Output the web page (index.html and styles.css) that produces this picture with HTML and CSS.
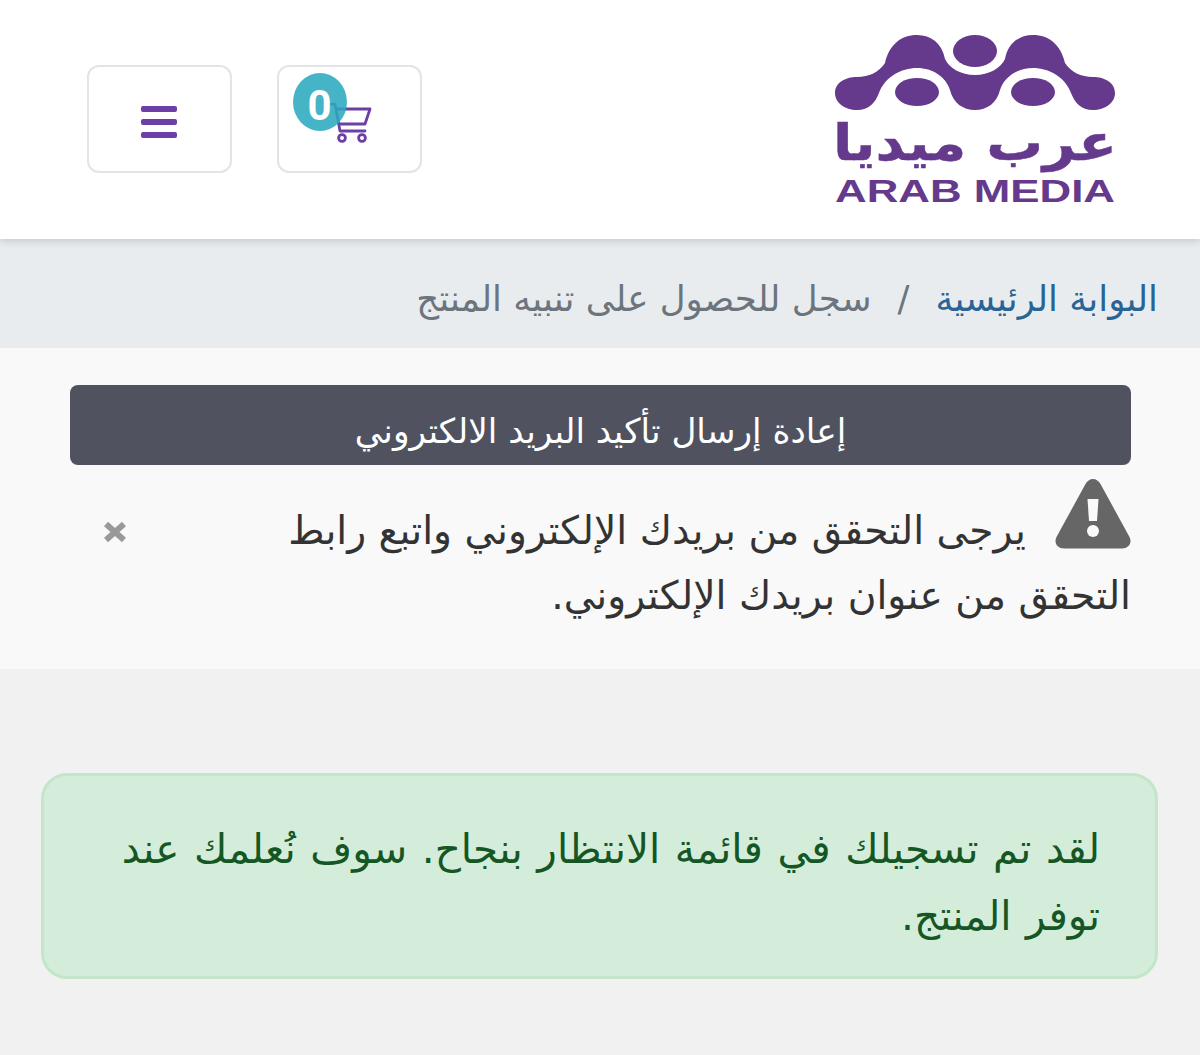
FILE: index.html
```html
<!DOCTYPE html>
<html lang="ar" dir="rtl">
<head>
<meta charset="utf-8">
<title>عرب ميديا</title>
<link rel="stylesheet" href="styles.css">
</head>
<body>
<header class="topbar">
  <svg class="logo" viewBox="0 0 280 170" width="280" height="170" aria-label="Arab Media">
    <path class="logo-mark" d="M0 58C0 48 10 42 22 42C34 42 44 37 50 28C54 10 66 0 82 0C96 0 107 8 110 24C114 33 126 40 140 40C154 40 166 33 170 24C173 8 184 0 198 0C214 0 226 10 230 28C236 37 246 42 258 42C270 42 280 48 280 58C280 68 270 75 258 75C246 75 240 68 236 58C230 42 214 33 198 33C182 33 169 42 165 55C162 68 152 75 140 75C128 75 118 68 115 55C111 42 98 33 82 33C66 33 50 42 44 58C40 68 34 75 22 75C10 75 0 68 0 58Z"/>
    <ellipse class="logo-mark" cx="140" cy="16" rx="22" ry="16"/>
    <ellipse class="logo-mark" cx="82" cy="57" rx="22" ry="14"/>
    <ellipse class="logo-mark" cx="198" cy="57" rx="22" ry="14"/>
    <text class="logo-ar" x="140" y="125" text-anchor="middle" textLength="284" lengthAdjust="spacingAndGlyphs">عرب ميديا</text>
    <text class="logo-en" x="140" y="167" text-anchor="middle" textLength="280" lengthAdjust="spacingAndGlyphs" direction="ltr">ARAB MEDIA</text>
  </svg>
  <div class="actions">
    <button class="icon-btn cart-btn" type="button">
      <svg class="cart" viewBox="0 0 44 42" width="44" height="42">
        <path d="M0 1H7L12 28H37M9 6H42L37 21H11" fill="none" stroke="#6b3fa5" stroke-width="2.8" stroke-linejoin="round" stroke-linecap="round"/>
        <circle cx="14" cy="35" r="3.4" fill="#fff" stroke="#6b3fa5" stroke-width="2.8"/>
        <circle cx="34" cy="35" r="3.4" fill="#fff" stroke="#6b3fa5" stroke-width="2.8"/>
      </svg>
      <span class="badge">0</span>
    </button>
    <button class="icon-btn" type="button">
      <span class="burger"><i></i><i></i><i></i></span>
    </button>
  </div>
</header>
<nav class="crumbs">
  <a href="#">البوابة الرئيسية</a>
  <span class="sep">/</span>
  <span class="current">سجل للحصول على تنبيه المنتج</span>
</nav>
<section class="verify">
  <a class="resend" href="#">إعادة إرسال تأكيد البريد الالكتروني</a>
  <div class="notice">
    <svg class="warn" viewBox="0 0 76 70" width="76" height="70">
      <path d="M38 0C41 0 44 2 45.500 5L74.500 58C77.500 64 73.500 69.500 67 69.500H9C2.500 69.500 -1.500 64 1.500 58L30.500 5C32 2 35 0 38 0Z" fill="#666"/>
      <path d="M32.500 20H43.500L42 42H34Z" fill="#f9f9f9"/>
      <circle cx="38" cy="52" r="6" fill="#f9f9f9"/>
    </svg>
    <svg class="close" viewBox="0 0 26 22" width="26" height="22">
      <path d="M4 3L22 19M22 3L4 19" fill="none" stroke="#999" stroke-width="6"/>
    </svg>
    يرجى التحقق من بريدك الإلكتروني واتبع رابط التحقق من عنوان بريدك الإلكتروني.
  </div>
</section>
<main class="content">
  <div class="success">لقد تم تسجيلك في قائمة الانتظار بنجاح. سوف نُعلمك عند توفر المنتج.</div>
</main>
</body>
</html>
```
FILE: styles.css
```css
* { box-sizing: border-box; }
html, body { margin: 0; padding: 0; }
body {
  width: 1200px;
  height: 1055px;
  overflow: hidden;
  background: #f1f1f1;
  font-family: "DejaVu Sans", "Noto Sans", sans-serif;
}
.topbar {
  height: 239px;
  background: #fff;
  display: flex;
  justify-content: space-between;
  align-items: flex-start;
  padding: 35px 85px 0 87px;
  box-shadow: 0 2px 8px rgba(0,0,0,.16);
  position: relative;
}
.logo { display: block; overflow: visible; }
.logo-mark { fill: #65398c; }
.logo-ar { fill: #65398c; stroke: #65398c; stroke-width: .5px; font-size: 50px; font-weight: 700; font-family: "DejaVu Sans", sans-serif; }
.logo-en { fill: #65398c; font-size: 32px; font-weight: 700; font-family: "Liberation Sans", sans-serif; }
.actions { display: flex; gap: 45px; padding-top: 30px; }
.icon-btn {
  width: 145px;
  height: 108px;
  background: #fff;
  border: 2.5px solid #e4e4e8;
  border-radius: 12px;
  padding: 0;
  display: flex;
  align-items: center;
  justify-content: center;
  position: relative;
}
.burger { display: flex; flex-direction: column; gap: 7px; margin: 5px 2px 0 0; }
.burger i { display: block; width: 36px; height: 6px; border-radius: 2px; background: #6b3fa5; }
.cart { position: absolute; left: 48.5px; top: 35.5px; }
.badge {
  position: absolute;
  left: 13.500px;
  top: 6px;
  width: 54px;
  height: 58px;
  border-radius: 50%;
  background: rgba(43,170,191,.88);
  color: #fff;
  font: 700 42px/66px Roboto, sans-serif;
  text-align: center;
}
.crumbs {
  height: 109px;
  background: #e9ecef;
  display: flex;
  align-items: center;
  gap: 26px;
  padding: 10px 42px 0;
  font-size: 35.6px;
  color: #6c757d;
}
.crumbs a { color: #2a6496; text-decoration: none; }
.verify {
  height: 321px;
  background: #f9f9f9;
  padding: 37px 69px 0 70px;
}
.resend {
  display: block;
  height: 80px;
  background: #50535f;
  color: #fff;
  border-radius: 8px;
  text-align: center;
  font-size: 34.3px;
  line-height: 92px;
  text-decoration: none;
}
.notice {
  margin-top: 33px;
  padding-left: 130px;
  position: relative;
  font-size: 39.2px;
  line-height: 65px;
  color: #333;
}
.warn { float: right; margin: -19px 0 0 29px; }
.close { position: absolute; left: 32px; top: 23px; }
.content { padding: 104px 42px 0 41px; }
.success {
  height: 206px;
  background: #d4edda;
  border: 3px solid #c3e6cb;
  border-radius: 26px;
  padding: 40px 55px 0;
  font-size: 40.5px;
  word-spacing: 1.7px;
  line-height: 67px;
  color: #155724;
}
```
